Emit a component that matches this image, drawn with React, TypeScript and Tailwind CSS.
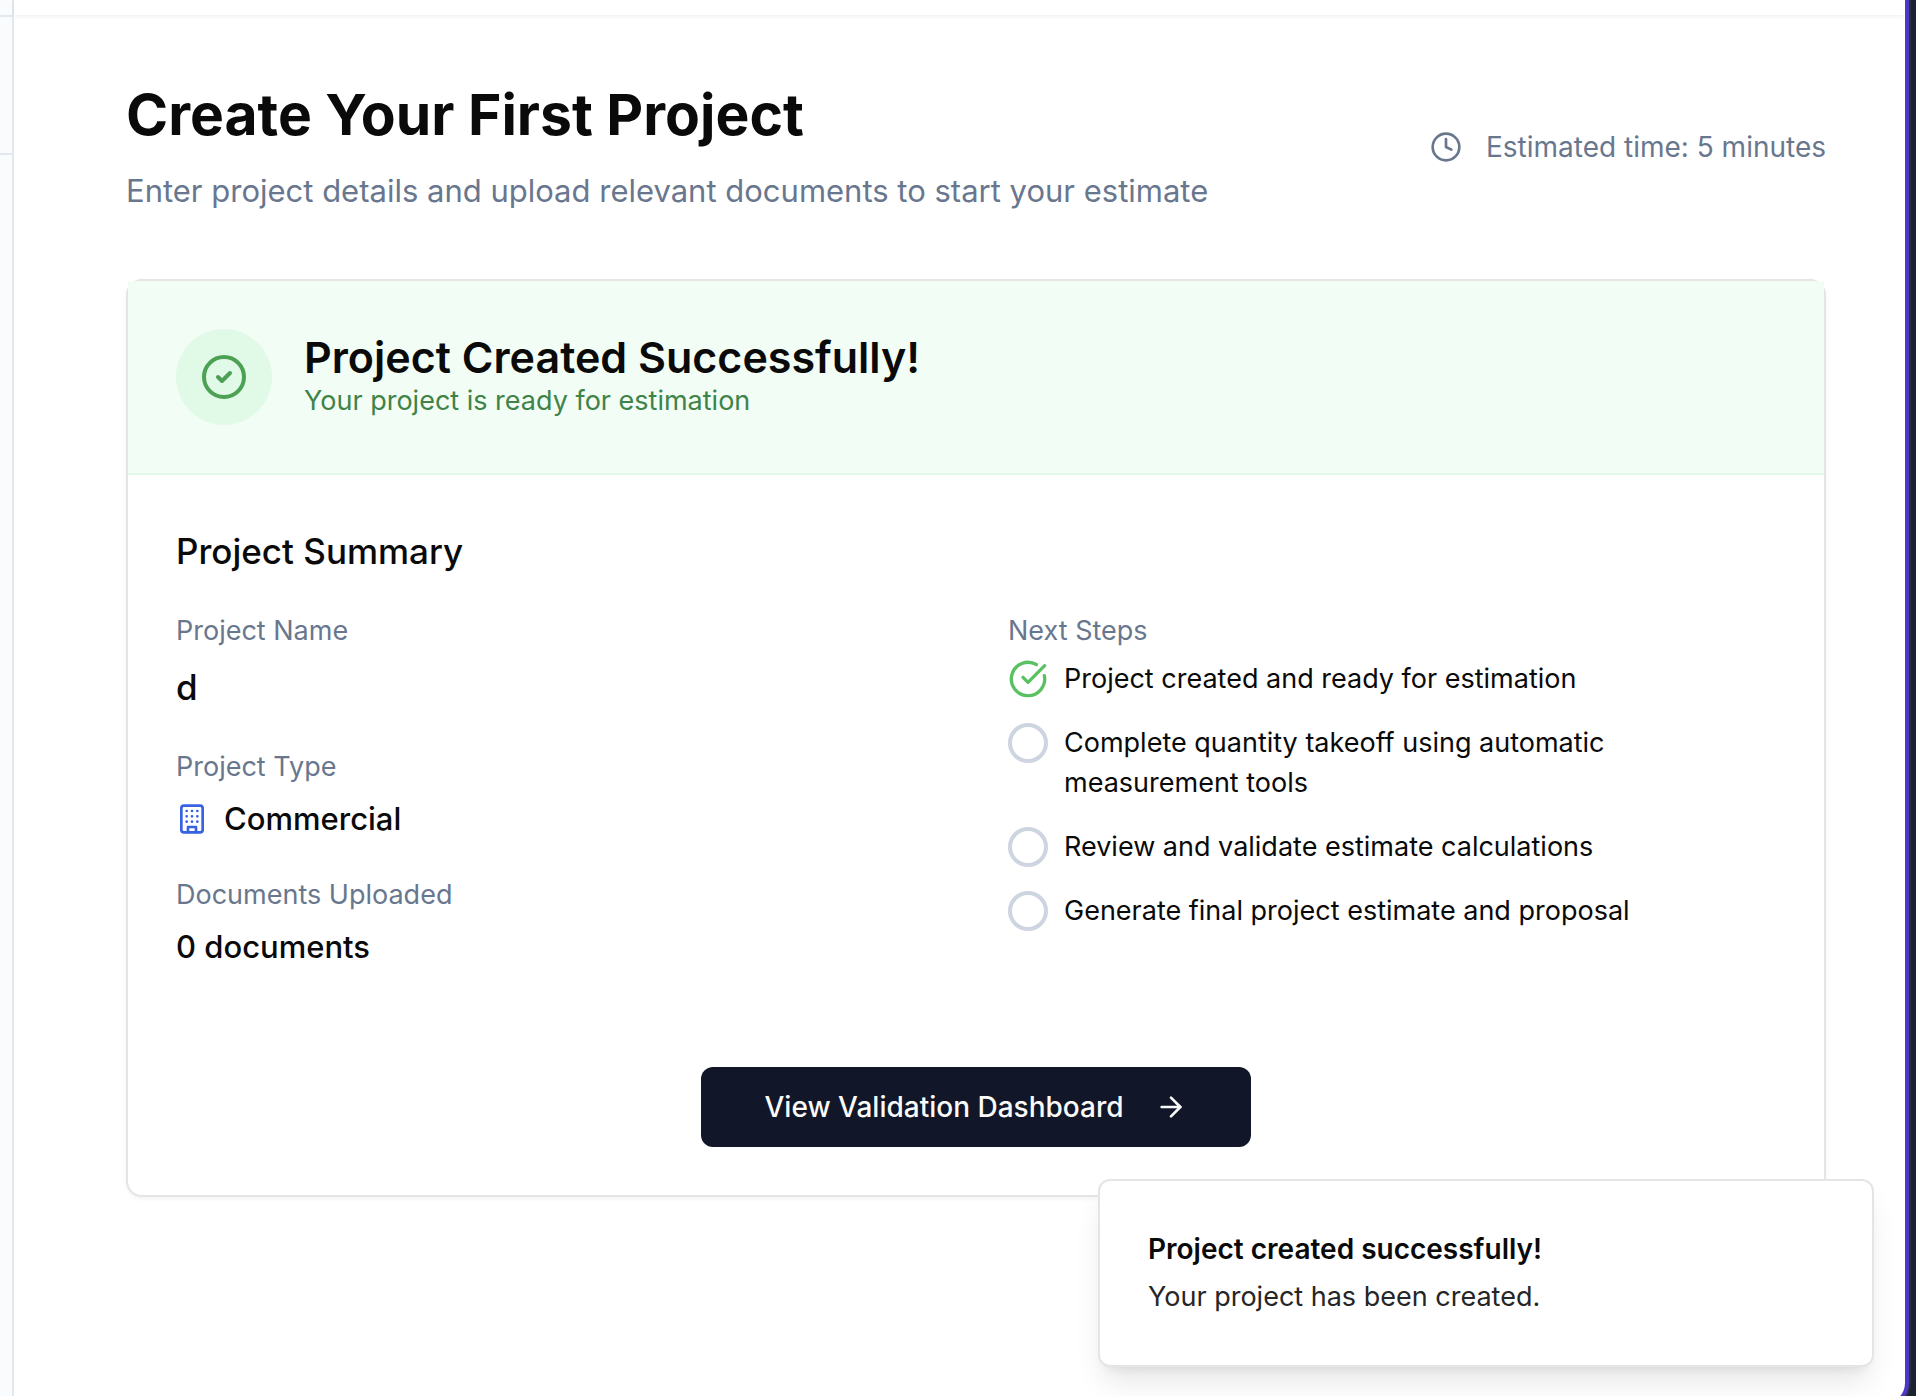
import React from "react";
import { ArrowRight, CircleCheck, CircleCheckBig, Clock } from "lucide-react";

const steps = [
  { label: "Project created and ready for estimation", done: true },
  { label: "Complete quantity takeoff using automatic measurement tools", done: false },
  { label: "Review and validate estimate calculations", done: false },
  { label: "Generate final project estimate and proposal", done: false },
];

function BuildingIcon() {
  return (
    <svg
      viewBox="0 0 24 24"
      fill="none"
      stroke="currentColor"
      strokeWidth="2"
      strokeLinecap="round"
      strokeLinejoin="round"
      aria-hidden="true"
      className="size-8 shrink-0 text-[#3662e3]"
    >
      <rect width="16" height="20" x="4" y="2" rx="2" ry="2" />
      <path d="M9 22v-4h6v4" />
      <path d="M8 6h.01M16 6h.01M12 6h.01M12 10h.01M12 14h.01M16 10h.01M16 14h.01M8 10h.01M8 14h.01" />
    </svg>
  );
}

function Sidebar() {
  return (
    <aside className="w-[14px] shrink-0 border-r-2 border-[#e2e8f0] bg-[#f9fbfd]">
      <div className="h-[17px] border-b-2 border-[#e2e8f0]" />
      <div className="h-[138px] border-b-2 border-[#e2e8f0]" />
    </aside>
  );
}

function PageHeader() {
  return (
    <header className="flex items-center justify-between">
      <div className="flex flex-col gap-4">
        <h1 className="text-[57px] leading-[72px] font-bold">Create Your First Project</h1>
        <p className="text-[31px] leading-[48px] text-[#69778e]">
          Enter project details and upload relevant documents to start your estimate
        </p>
      </div>
      <div className="flex items-center gap-6 text-[28px] leading-10 text-[#69778e]">
        <Clock className="size-8" />
        <span>Estimated time: 5 minutes</span>
      </div>
    </header>
  );
}

function Steps() {
  return (
    <div>
      <h4 className="text-[27px] leading-10 text-[#69778e]">Next Steps</h4>
      <ul className="mt-2 flex flex-col gap-6">
        {steps.map((step) => (
          <li key={step.label} className="flex items-start gap-4">
            {step.done ? (
              <CircleCheckBig className="size-10 shrink-0 text-[#5ac163]" />
            ) : (
              <span className="size-10 shrink-0 rounded-full border-4 border-[#cdd5e0]" />
            )}
            <span className="text-[27px] leading-10">{step.label}</span>
          </li>
        ))}
      </ul>
    </div>
  );
}

function Details() {
  return (
    <dl className="flex flex-col gap-8">
      <div className="flex flex-col gap-2">
        <dt className="text-[27px] leading-10 text-[#69778e]">Project Name</dt>
        <dd className="text-[35px] leading-[56px] font-medium">d</dd>
      </div>
      <div className="flex flex-col gap-2">
        <dt className="text-[27px] leading-10 text-[#69778e]">Project Type</dt>
        <dd className="flex items-center gap-4 text-[31px] leading-[48px] font-medium">
          <BuildingIcon />
          Commercial
        </dd>
      </div>
      <div className="flex flex-col gap-2">
        <dt className="text-[27px] leading-10 text-[#69778e]">Documents Uploaded</dt>
        <dd className="text-[31px] leading-[48px] font-medium">0 documents</dd>
      </div>
    </dl>
  );
}

function ProjectCard() {
  return (
    <section className="rounded-2xl border-2 border-[#e5e5e5] bg-white shadow-[0_2px_4px_rgba(0,0,0,0.05)]">
      <div className="flex items-center gap-8 border-b-2 border-[#e1f9e7] bg-[#f2fdf5] p-12">
        <div className="flex size-24 shrink-0 items-center justify-center rounded-full bg-[#e1f9e7]">
          <CircleCheck className="size-12 text-[#4ca154]" />
        </div>
        <div>
          <h2 className="text-[43px] leading-[48px] font-semibold">Project Created Successfully!</h2>
          <p className="text-[27px] leading-10 text-[#3f8348]">Your project is ready for estimation</p>
        </div>
      </div>
      <div className="p-12">
        <h3 className="text-[35px] leading-[56px] font-medium">Project Summary</h3>
        <div className="mt-8 grid grid-cols-2 gap-16">
          <Details />
          <Steps />
        </div>
        <div className="mt-24 flex justify-center">
          <button
            type="button"
            className="flex h-20 items-center gap-8 rounded-xl bg-[#111728] px-16 text-[28px] leading-10 font-medium text-[#fafafa]"
          >
            View Validation Dashboard
            <ArrowRight className="size-8" />
          </button>
        </div>
      </div>
    </section>
  );
}

function Toast() {
  return (
    <div
      role="status"
      className="absolute right-[31px] bottom-9 w-[776px] rounded-xl border-2 border-[#e5e5e5] bg-white p-12 shadow-[0_20px_30px_-6px_rgba(0,0,0,0.1),0_8px_12px_-8px_rgba(0,0,0,0.1)]"
    >
      <p className="text-[28px] leading-10 font-semibold">Project created successfully!</p>
      <p className="mt-2 text-[27px] leading-10 text-[#262626]">Your project has been created.</p>
    </div>
  );
}

export default function App() {
  return (
    <div className="h-screen overflow-hidden bg-[#1a2230] pr-[7px] font-['Inter',sans-serif] text-[#0a0a0a]">
      <div className="relative flex h-[calc(100%+11px)] overflow-hidden rounded-br-[24px] border-r-4 border-b-4 border-[#4d38c6] bg-white shadow-[0_0_0_2px_#2b2e3f]">
        <Sidebar />
        <div className="min-w-0 flex-1">
          <div className="h-[15px] bg-white shadow-[0_2px_4px_rgba(0,0,0,0.06)]" />
          <main className="flex flex-col gap-16 pt-16 pr-[79px] pl-28">
            <PageHeader />
            <ProjectCard />
          </main>
        </div>
        <Toast />
      </div>
    </div>
  );
}
